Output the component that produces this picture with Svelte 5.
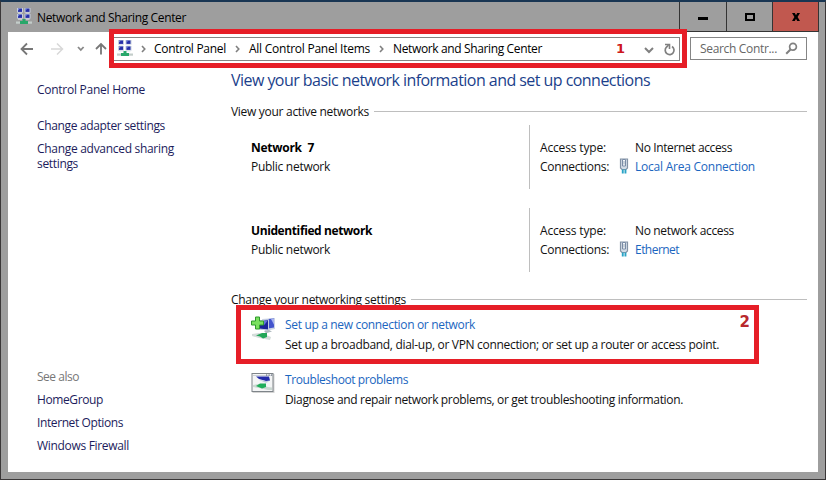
<script>
  const crumbs = [
    { label: 'Control Panel', width: 72 },
    { label: 'All Control Panel Items', width: 121 },
    { label: 'Network and Sharing Center', width: 149 }
  ];
  const networks = [
    { name: 'Network  7', nameWidth: 63, access: 'No Internet access', accessWidth: 97, link: 'Local Area Connection', linkWidth: 120 },
    { name: 'Unidentified network', nameWidth: 121, access: 'No network access', accessWidth: 99, link: 'Ethernet', linkWidth: 44 }
  ];
  const related = [
    { label: 'HomeGroup', width: 66 },
    { label: 'Internet Options', width: 86 },
    { label: 'Windows Firewall', width: 92 }
  ];

  // Tracks the label so that it takes up the given width in pixels.
  function fit(node, width) {
    const natural = node.getBoundingClientRect().width;
    node.style.letterSpacing = (width - natural) / node.textContent.length + 'px';
  }
</script>

{#snippet networkIcon()}
  <svg class="net-icon" width="16" height="17" viewBox="0 0 16 17">
    {#each [[1, 0], [8.5, 0], [1, 6], [8.5, 6]] as [x, y]}
      <rect x={x} y={y} width="6" height="4.6" fill="#c5cede" />
      <rect x={x + 1} y={y + 0.5} width="4" height="3.4" fill="#2730a8" />
      <path d="M{x + 1} {y + 0.5}h2l-2 2z" fill="#7e8fe0" />
      <rect x={x + 1} y={y + 4.6} width="4" height="1" fill="#dfe4ea" />
    {/each}
    <rect x="0" y="13.5" width="16" height="2.2" fill="#c3cdca" />
    <path d="M6.500 11h3v2h2.500v3H4v-3h2.500z" fill="#28a76a" />
  </svg>
{/snippet}

{#snippet chevron()}
  <svg class="chevron" width="5" height="8" viewBox="0 0 5 8"><path d="M1 1l2.800 3L1 7" fill="none" stroke="#808080" stroke-width="1.600" /></svg>
{/snippet}

<div class="window">
  <header class="titlebar">
    {@render networkIcon()}
    <span class="title" use:fit={149}>Network and Sharing Center</span>
    <div class="controls">
      <button class="control min" aria-label="Minimize"><svg width="12" height="12"><rect x="1" y="6" width="10" height="3" /></svg></button>
      <button class="control max" aria-label="Maximize"><svg width="12" height="12"><path d="M2 3h8v6H2z" fill="none" stroke="#000" stroke-width="2" /></svg></button>
      <button class="control close" aria-label="Close"><svg width="12" height="12"><path d="M2 2h2.800L6 4.200 7.200 2H10L7.600 5.900 10 10H7.200L6 7.700 4.800 10H2l2.400-4.100z" /></svg></button>
    </div>
  </header>

  <div class="client">
    <nav class="toolbar">
      <svg class="arrows" width="88" height="20" viewBox="0 0 88 20" fill="none">
        <path d="M25 12H14M19 6.500L13.500 12l5.500 5.500" stroke="#777" stroke-width="1.800" />
        <path d="M43 12h11M49 6.500L54.500 12 49 17.500" stroke="#d8d8d8" stroke-width="1.500" />
        <path d="M70 10l2.800 3L75.600 10" stroke="#888" stroke-width="1.800" />
        <path d="M93 17.500V7M88 12l5-5 5 5" stroke="#777" stroke-width="1.800" />
      </svg>
      <div class="address">
        {@render networkIcon()}
        {#each crumbs as crumb}
          {@render chevron()}
          <span class="crumb" use:fit={crumb.width}>{crumb.label}</span>
        {/each}
        <svg class="address-tools" width="36" height="16" viewBox="0 0 36 16" fill="none">
          <path d="M4 6l4 4L12 6" stroke="#808080" stroke-width="2" />
          <path d="M31 4.500A4.400 4.400 0 1 1 25.300 5.300L27.500 3" stroke="#808080" stroke-width="1.700" />
          <path d="M24 2.500h4.500V7" stroke="#808080" stroke-width="1.600" />
        </svg>
      </div>
      <div class="search">
        <span use:fit={77}>Search Contr...</span>
        <svg width="13" height="13" viewBox="0 0 13 13" fill="none"><circle cx="8" cy="4.700" r="3.400" stroke="#808080" stroke-width="1.700" /><path d="M5.700 7.200L1.200 11.700" stroke="#808080" stroke-width="2" /></svg>
      </div>
    </nav>

    <div class="body">
      <aside>
        <a class="home" href="#home"><span use:fit={108}>Control Panel Home</span></a>
        <a class="adapter" href="#adapter"><span use:fit={128}>Change adapter settings</span></a>
        <a class="sharing" href="#sharing"><span use:fit={137}>Change advanced sharing</span> <span use:fit={41}>settings</span></a>
        <div class="also">
          <span class="also-title" use:fit={42}>See also</span>
          {#each related as item}
            <a href="#related"><span use:fit={item.width}>{item.label}</span></a>
          {/each}
        </div>
      </aside>

      <main>
        <h1><span use:fit={419}>View your basic network information and set up connections</span></h1>
        <div class="section active"><span use:fit={138}>View your active networks</span><hr /></div>
        {#each networks as net}
          <section class="network">
            <div class="identity">
              <strong use:fit={net.nameWidth}>{net.name}</strong>
              <span use:fit={79}>Public network</span>
            </div>
            <div class="details">
              <div class="detail"><span class="key"><span use:fit={66}>Access type:</span></span><span use:fit={net.accessWidth}>{net.access}</span></div>
              <div class="detail">
                <span class="key"><span use:fit={69}>Connections:</span></span>
                <svg class="plug" width="10" height="16" viewBox="0 0 10 16">
                  <path d="M1.500 1h7v9L7 11.500H3L1.500 10z" fill="#d3dce6" stroke="#8493a5" stroke-width="1.200" />
                  <path d="M3.500 1.500h3v6.500h-3z" fill="#f5f8fa" stroke="#7a8ca6" />
                  <path d="M5 3v3.500" stroke="#9cabb9" />
                  <path d="M2.800 11.500h1.900v4H2.800zM5.500 11.500h1.900v4H5.500z" fill="#29a3c6" />
                </svg>
                <a class="link" href="#connection"><span use:fit={net.linkWidth}>{net.link}</span></a>
              </div>
            </div>
          </section>
        {/each}
        <div class="section settings"><span use:fit={175}>Change your networking settings</span><hr /></div>

        <section class="task setup">
          <svg class="task-icon" width="25" height="25" viewBox="0 0 25 25">
            <path d="M11 3l13-1v11l-10 2z" fill="#cbd3e4" />
            <path d="M17 3l6-.4v9l-6 1z" fill="#4354cd" />
            <path d="M20 3l3-.3v6z" fill="#a7b3f0" />
            <path d="M8 5l9.500-1.500v10.500L8 13z" fill="#1b249a" stroke="#c2cce2" />
            <path d="M13 4.800l4-.6-4 5z" fill="#6273d8" />
            <path d="M13 15l5-1 3 1.500-6 1.800z" fill="#aeb9be" />
            <path d="M1 18l7-1 5 1 7 3-1 3-11-2-7-2z" fill="#d4dcda" />
            <path d="M5 19.500l6-2.500h5v4l-4 1.500-3-2z" fill="#21a657" />
            <path d="M4.500 1h4v4h4v4h-4v4h-4V9h-4V5h4z" fill="#7be060" stroke="#2f9a2c" />
          </svg>
          <div class="task-text">
            <a class="link" href="#setup"><span use:fit={190}>Set up a new connection or network</span></a>
            <span class="about" use:fit={434}>Set up a broadband, dial-up, or VPN connection; or set up a router or access point.</span>
          </div>
        </section>
        <section class="task trouble">
          <svg class="task-icon" width="25" height="21" viewBox="0 0 25 21">
            <rect x="1.500" y="1" width="22" height="19" fill="#d4d4d4" />
            <rect x="1" y=".5" width="21" height="18" fill="#f4f5f6" stroke="#7e8489" />
            <path d="M2 2h19v1H2z" fill="#cbd0d6" />
            <path d="M15 1.500h1.200v1H15zM17.500 1.500h1.200v1h-1.200zM20 1.500h1.200v1H20z" fill="#525c70" />
            <path d="M5 3.500h13l1 4-4 .5-7-2z" fill="#242caa" />
            <path d="M8 7l10 1.500-3 1.200z" fill="#bdc8dc" />
            <path d="M2 12l6-1 9 3 4 .5V17h-4l-9-2-6-1z" fill="#cbd8d2" />
            <path d="M5 13l4-2.500h6V14l-4 1.500z" fill="#20ad5a" />
          </svg>
          <div class="task-text">
            <a class="link" href="#trouble"><span use:fit={123}>Troubleshoot problems</span></a>
            <span class="about" use:fit={398}>Diagnose and repair network problems, or get troubleshooting information.</span>
          </div>
        </section>
      </main>
    </div>
  </div>

  <div class="callout first"><b>1</b></div>
  <div class="callout second"><b>2</b></div>
</div>

<style>
  .window {
    position: relative;
    box-sizing: border-box;
    width: 826px;
    height: 480px;
    padding: 0 7px 7px;
    border: 1px solid #3a3738;
    border-top: 2px solid #193653;
    background: #9e9e9e;
    font: 12px/16px "Open Sans", "Noto Sans", sans-serif;
    font-stretch: 92%;
    color: #111;
    white-space: nowrap;
    overflow: hidden;
  }
  span, strong { display: inline-block; white-space: pre; }
  a { color: #1c1c5c; text-decoration: none; }
  .link { color: #1b66c0; }

  .titlebar { display: flex; height: 30px; align-items: flex-start; }
  .titlebar .net-icon { margin: 6px 5px 0 8px; }
  .title { margin-top: 8px; color: #000; }
  .controls { display: flex; margin-left: auto; height: 30px; }
  .control {
    box-sizing: border-box;
    display: flex;
    width: 46px;
    height: 30px;
    padding: 0;
    align-items: center;
    justify-content: center;
    border: 0 solid #343434;
    border-width: 0 0 1px 1px;
    background: #9e9e9e;
  }
  .control.min { width: 47px; }
  .control.close { background: #c1584f; border-right-width: 1px; width: 47px; margin-right: -1px; }

  .client { height: 440px; background: #fff; }
  .toolbar { display: flex; height: 33px; padding-top: 5px; box-sizing: border-box; }
  .arrows { overflow: visible; margin-right: 14px; }
  .address {
    box-sizing: border-box;
    display: flex;
    align-items: center;
    width: 570px;
    height: 24px;
    padding-left: 6px;
    border: 1px solid #858585;
  }
  .address .net-icon { margin: 0 0 1px 0; }
  .chevron { margin: 0 9px; }
  .address .net-icon + .chevron { margin-left: 8px; margin-right: 8px; }
  .crumb { color: #000; }
  .address-tools { margin: 2px 2px 0 auto; }
  .search {
    box-sizing: border-box;
    display: flex;
    align-items: center;
    width: 117px;
    height: 23px;
    margin-left: 10px;
    padding: 1px 0 0 9px;
    border: 1px solid #858585;
    color: #666;
  }
  .search svg { margin: 0 0 1px 8px; }

  .body { display: flex; height: 407px; }
  aside { display: flex; flex-direction: column; align-items: flex-start; width: 223px; box-sizing: border-box; padding: 17px 0 0 29px; }
  .adapter { margin-top: 20px; }
  .sharing { display: flex; flex-direction: column; align-items: flex-start; margin-top: 7px; line-height: 15px; }
  .also { display: flex; flex-direction: column; align-items: flex-start; gap: 7px; margin-top: 198px; }
  .also-title { color: #777; }

  main { width: 576px; }
  h1 { height: 22px; margin: 4px 0 0; font-size: 16px; line-height: 22px; font-weight: 400; color: #1b3f8b; }
  .section { display: flex; height: 16px; align-items: center; gap: 5px; }
  .section hr { flex: 1; height: 1px; margin: -1px 0 0; border: 0; background: #bebebe; }
  .active { margin-top: 13px; }
  .network { display: flex; height: 64px; margin: 5px 0 19px 20px; }
  .network + .network { margin-top: 6px; }
  .identity { display: flex; flex-direction: column; align-items: flex-start; gap: 3px; width: 278px; padding-top: 15px; box-sizing: border-box; }
  .identity strong { color: #000; }
  .details { display: flex; flex-direction: column; gap: 3px; padding: 15px 0 0 10px; border-left: 1px solid #bebebe; box-sizing: border-box; }
  .detail { display: flex; height: 16px; }
  .key { width: 95px; }
  .plug { margin: -1px 6px 0 -16px; }
  .settings { margin-top: 20px; }
  .task { display: flex; height: 40px; margin-left: 20px; }
  .setup { margin-top: 9px; }
  .trouble { margin-top: 15px; }
  .task-icon { width: 25px; margin: -1px 9px 0 0; }
  .trouble .task-icon { margin-top: 1px; }
  .task-text { display: flex; flex-direction: column; align-items: flex-start; gap: 4px; }

  .callout { position: absolute; box-sizing: border-box; border: 5px solid #e61e27; color: #b8282d; font: bold 13px/16px "DejaVu Sans", sans-serif; }
  .callout b { position: absolute; }
  .first { left: 108px; top: 27px; width: 578px; height: 39px; }
  .first b { left: 502px; top: 7px; color: #cd171c; }
  .second { left: 235px; top: 303px; width: 523px; height: 59px; }
  .second b { right: 4px; top: 4px; font-size: 15px; }
</style>
